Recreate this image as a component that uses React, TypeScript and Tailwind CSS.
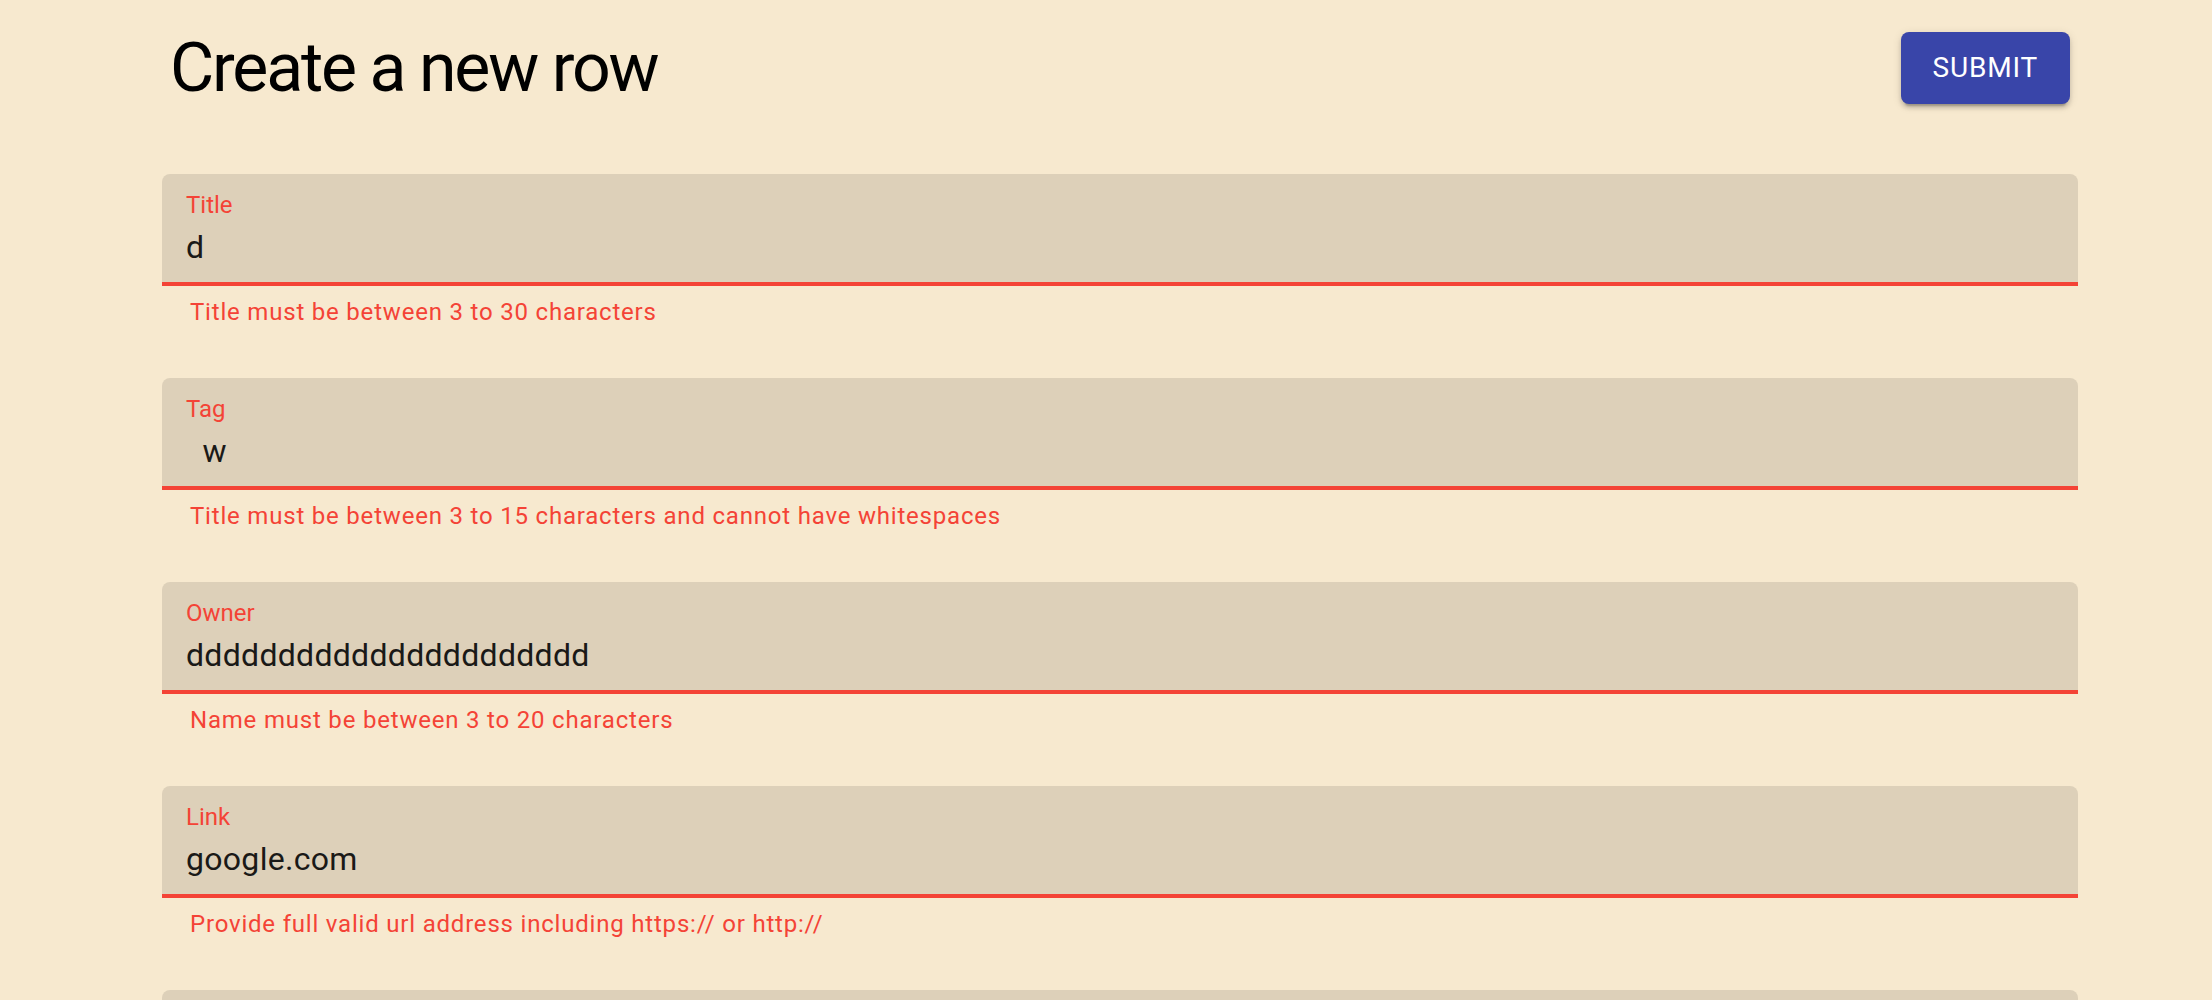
import React from "react";

type Field = {
  label: string;
  value: string;
  error: string;
};

const fields: Field[] = [
  { label: "Title", value: "d", error: "Title must be between 3 to 30 characters" },
  {
    label: "Tag",
    value: "  w",
    error: "Title must be between 3 to 15 characters and cannot have whitespaces",
  },
  {
    label: "Owner",
    value: "dddddddddddddddddddddd",
    error: "Name must be between 3 to 20 characters",
  },
  {
    label: "Link",
    value: "google.com",
    error: "Provide full valid url address including https:// or http://",
  },
  { label: "", value: "", error: "" },
];

function FilledField({ label, value, error }: Field) {
  return (
    <div className="flex flex-col">
      <div className="relative h-[112px] rounded-t-[8px] border-b-[4px] border-[#f44336] bg-[#ddd0b9]">
        {label && (
          <label className="absolute left-[24px] top-[14px] text-[24px] leading-[34.5px] text-[#f44336]">
            {label}
          </label>
        )}
        <input
          readOnly
          value={value}
          aria-label={label || "field"}
          className="block h-[108px] w-full bg-transparent px-[24px] pt-[54px] pb-[16px] text-[32px] leading-[38px] tracking-[0.3px] text-[#1a1917] outline-none"
        />
      </div>
      {error && (
        <p className="mx-[28px] mt-[6px] h-[40px] text-[24px] leading-[40px] tracking-[0.03333em] text-[#f44336]">
          {error}
        </p>
      )}
    </div>
  );
}

export default function App() {
  return (
    <div className="min-h-screen bg-[#f7e9cf] font-['Roboto',sans-serif]">
      <div className="pl-[162px] pr-[134px] pt-[26px]">
        <div className="flex items-center justify-between pl-[8px] pr-[8px]">
          <h4 className="text-[68px] font-normal leading-[84px] tracking-[-2.2px] text-black">
            Create a new row
          </h4>
          <button className="rounded-[8px] bg-[#3945a9] px-[32px] py-[12px] text-[28px] font-normal uppercase leading-[48px] tracking-[0.02857em] text-white shadow-[0_6px_2px_-4px_rgba(0,0,0,0.2),0_4px_4px_0_rgba(0,0,0,0.14),0_2px_10px_0_rgba(0,0,0,0.12)]">
            Submit
          </button>
        </div>
        <form className="mt-[64px] flex flex-col gap-[46px]">
          {fields.map((f, i) => (
            <FilledField key={i} {...f} />
          ))}
        </form>
      </div>
    </div>
  );
}
